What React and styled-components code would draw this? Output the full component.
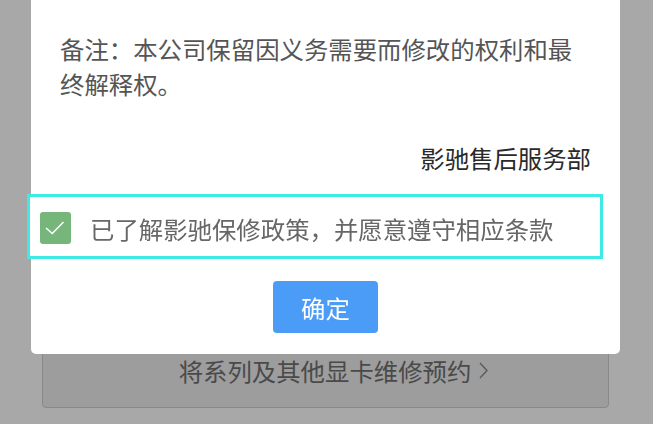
import React from 'react'
import styled, { createGlobalStyle } from 'styled-components'

const GlobalStyle = createGlobalStyle`
    html, body {
        margin: 0;
        padding: 0;
        background: #ffffff;
    }
    body {
        font-family: "Noto Sans CJK SC", "Noto Sans", sans-serif;
    }
`

const Page = styled.div`
    height: 424px;
    overflow: hidden;
    padding: 300px 44px 0 42px;
    box-sizing: border-box;
`

const BookingCard = styled.div`
    height: 108px;
    box-sizing: border-box;
    border: 1px solid #cfcfcf;
    border-radius: 4px;
    background: #eeeeee;
    display: flex;
    align-items: flex-end;
    justify-content: center;
    padding: 0 0 19px 16px;
`

const BookingLink = styled.div`
    display: flex;
    align-items: center;
    gap: 8px;
    font-size: 24.4px;
    line-height: 35px;
    color: #717171;
`

const Overlay = styled.div`
    position: fixed;
    inset: 0;
    background: rgba(0, 0, 0, 0.34);
    padding-left: 31px;
`

const Dialog = styled.div`
    width: 589px;
    margin-top: -20px;
    padding: 51px 0 21px;
    box-sizing: border-box;
    background: #ffffff;
    border-radius: 5px;
    display: flex;
    flex-direction: column;
`

const Note = styled.p`
    margin: 0;
    padding: 0 29px;
    font-size: 24.4px;
    line-height: 35px;
    color: #555555;
`

const Signature = styled(Note)`
    margin-top: 39px;
    text-align: right;
    color: #2a2a2a;
`

const AgreeRow = styled.label`
    margin: 19px 17px 0 -4px;
    height: 65px;
    box-sizing: border-box;
    border: 3px solid #3eebe4;
    background: #ffffff;
    padding: 3px 0 0 10px;
    display: flex;
    align-items: center;
    gap: 19px;
    font-size: 24.4px;
    color: #676767;
`

const Check = styled.span`
    width: 31px;
    height: 32px;
    flex: none;
    border-radius: 3px;
    background: ${props => (props.checked ? '#77b67b' : '#ffffff')};
    display: flex;
`

const Actions = styled.div`
    margin-top: 22px;
    display: flex;
    justify-content: center;
`

const ConfirmButton = styled.button`
    width: 105px;
    height: 52px;
    border: none;
    border-radius: 4px;
    background: #4b9cf7;
    color: #ffffff;
    font-family: inherit;
    font-size: 24.4px;
    padding: 0;
    cursor: pointer;
`

const Chevron = () => (
    <svg width='9' height='17' viewBox='0 0 9 17'>
        <polyline points='1,1 8,8.5 1,16' fill='none' stroke='#8a8a8a' strokeWidth='1.4' />
    </svg>
)

export default function App() {
    return (<>
        <GlobalStyle />
        <Page>
            <BookingCard>
                <BookingLink>将系列及其他显卡维修预约 <Chevron /></BookingLink>
            </BookingCard>
        </Page>
        <Overlay>
            <Dialog>
                <Note>备注：本公司保留因义务需要而修改的权利和最终解释权。</Note>
                <Signature>影驰售后服务部</Signature>
                <AgreeRow>
                    <Check checked>
                        <svg width='31' height='32' viewBox='0 0 31 32'>
                            <polyline points='6,16 12.3,21.5 23.5,10' fill='none' stroke='#ffffff' strokeWidth='1.6' />
                        </svg>
                    </Check>
                    已了解影驰保修政策，并愿意遵守相应条款
                </AgreeRow>
                <Actions>
                    <ConfirmButton>确定</ConfirmButton>
                </Actions>
            </Dialog>
        </Overlay>
    </>)
}
